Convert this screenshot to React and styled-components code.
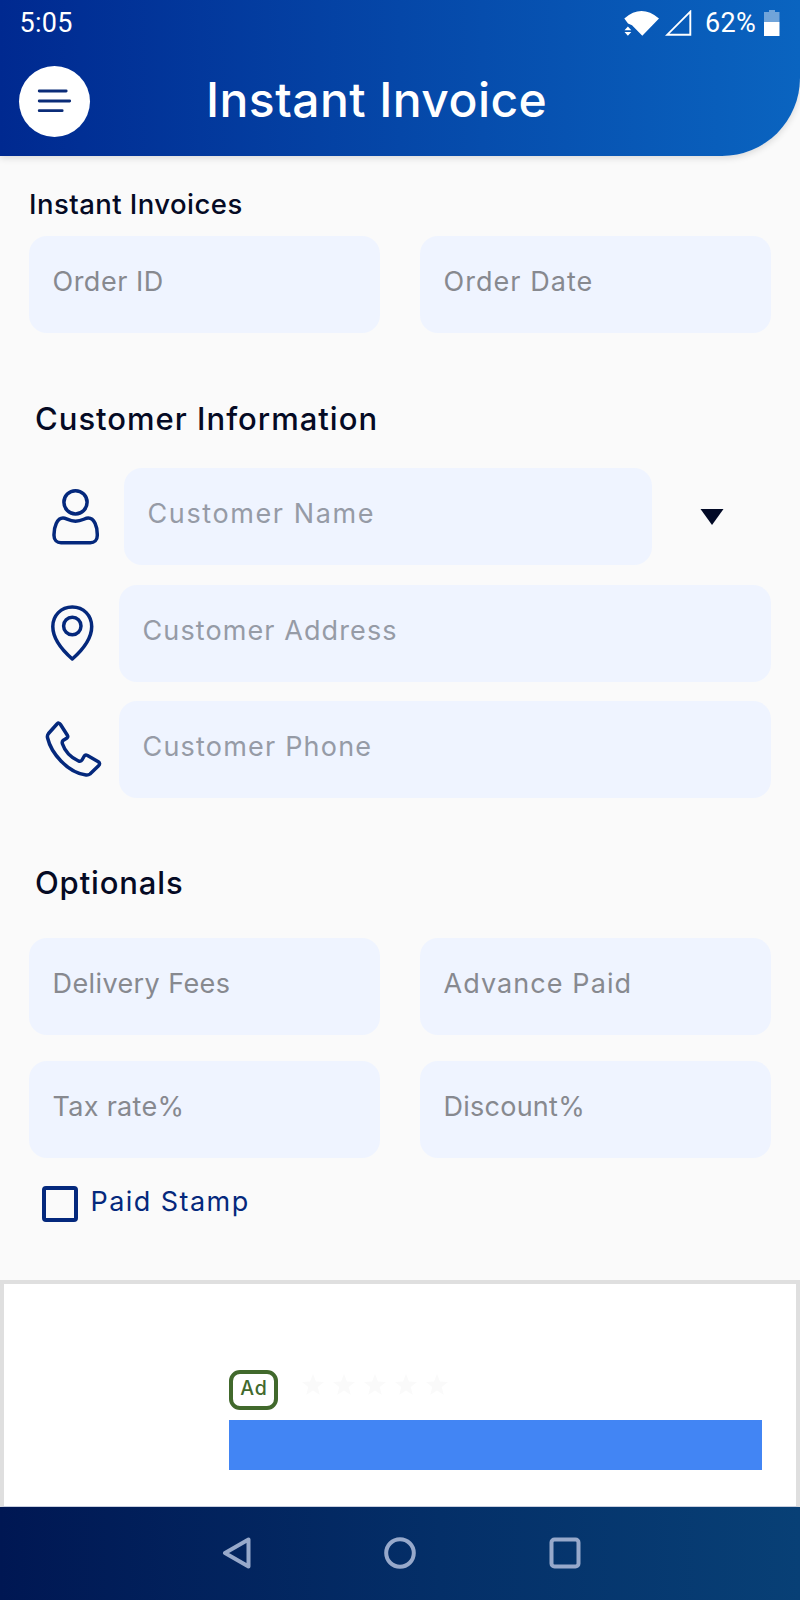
import React, { useState } from "react";
import styled, { createGlobalStyle } from "styled-components";

const GlobalStyle = createGlobalStyle`
  * {
    box-sizing: border-box;
  }
  body {
    margin: 0;
    background: #fafafa;
    font-family: Inter, "Liberation Sans", sans-serif;
  }
  svg {
    display: block;
    flex-shrink: 0;
  }
`;

const Screen = styled.div`
  width: 800px;
  height: 1600px;
  display: flex;
  flex-direction: column;
  background: #fafafa;
  overflow: hidden;
`;

const Header = styled.header`
  height: 155.5px;
  flex-shrink: 0;
  background: linear-gradient(90deg, #002990 0%, #0547a8 50%, #0a64c0 100%);
  border-bottom-right-radius: 78px;
  box-shadow: 0 2px 7px rgba(0, 0, 0, 0.14);
`;

const StatusBar = styled.div`
  height: 46px;
  padding: 0 20px 0 19.5px;
  display: flex;
  align-items: center;
  justify-content: space-between;
  color: #fff;
  font-family: Roboto, sans-serif;
  font-size: 27px;
  line-height: 36px;
  letter-spacing: 0.3px;
`;

const StatusIcons = styled.div`
  display: flex;
  align-items: center;
`;

const BatteryLevel = styled.span`
  margin-right: 8px;
`;

const TitleBar = styled.div`
  display: flex;
  align-items: center;
  height: 110px;
  padding-left: 19px;
`;

const MenuButton = styled.button`
  width: 71px;
  height: 71px;
  padding: 0;
  border: none;
  border-radius: 50%;
  background: #fff;
  display: flex;
  align-items: center;
  justify-content: center;
  cursor: pointer;
`;

const Title = styled.h1`
  margin: 0 0 4px 116px;
  color: #fff;
  font-size: 48px;
  font-weight: 500;
  letter-spacing: 0.45px;
`;

const Form = styled.main`
  height: 1124.5px;
  flex-shrink: 0;
  padding: 28.5px 29px 0;
`;

const SectionTitle = styled.h2`
  margin: 0 0 ${({ $gap }) => $gap}px;
  padding-left: ${({ $small }) => ($small ? 0 : 6)}px;
  height: 40px;
  line-height: 40px;
  color: #050a24;
  font-size: ${({ $small }) => ($small ? 27.5 : 31)}px;
  font-weight: 500;
  letter-spacing: ${({ $spacing }) => $spacing}px;
`;

const FieldGrid = styled.div`
  display: grid;
  grid-template-columns: 351px 351px;
  column-gap: 40px;
  row-gap: 25.5px;
  margin-bottom: ${({ $after }) => $after}px;
`;

const Field = styled.div`
  height: 97px;
  flex: 1;
  padding: 0 22px 6px 23.5px;
  border-radius: 18px;
  background: #eff4ff;
  color: ${({ $soft }) => ($soft ? "#969ba6" : "#87898f")};
  display: flex;
  align-items: center;
  font-size: 27px;
  font-weight: 400;
  white-space: nowrap;
  letter-spacing: ${({ $spacing }) => $spacing}px;
`;

const CustomerList = styled.div`
  display: flex;
  flex-direction: column;
  gap: 19.5px;
  margin-bottom: 65px;
`;

const CustomerRow = styled.div`
  display: flex;
  align-items: center;
`;

const IconSlot = styled.div`
  width: ${({ $wide }) => ($wide ? 95 : 90)}px;
  padding-left: ${({ $left }) => $left}px;
`;

const Dropdown = styled.button`
  width: 119px;
  height: 97px;
  padding: 0 0 0 48px;
  border: none;
  background: none;
  display: flex;
  align-items: center;
  cursor: pointer;
`;

const StampRow = styled.label`
  display: flex;
  align-items: center;
  height: 36px;
  margin: 28.5px 0 0 13px;
  cursor: pointer;
`;

const CheckBox = styled.span`
  width: 36px;
  height: 36px;
  border: 4px solid #04287c;
  border-radius: 4px;
  background: ${({ $checked }) => ($checked ? "#04287c" : "transparent")};
`;

const StampLabel = styled.span`
  margin: 0 0 6px 12.5px;
  color: #04287c;
  font-size: 27px;
  font-weight: 400;
  letter-spacing: 1.45px;
`;

const AdBanner = styled.section`
  height: 226.5px;
  flex-shrink: 0;
  padding: 86px 0 0 225px;
  background: #fff;
  border: 4px solid #dfdfdf;
  border-bottom: 1px solid #c8cfe0;
`;

const AdMeta = styled.div`
  display: flex;
  align-items: center;
  gap: 24px;
  margin-bottom: 10px;
`;

const AdBadge = styled.span`
  width: 49px;
  height: 40px;
  padding: 0 0 4px 1px;
  border: 4px solid #41692c;
  border-radius: 11px;
  color: #41692c;
  display: flex;
  align-items: center;
  justify-content: center;
  font-size: 19.5px;
  font-weight: 500;
  letter-spacing: 0.8px;
`;

const Stars = styled.div`
  display: flex;
  gap: 9px;
  margin-bottom: 10px;
`;

const AdButton = styled.div`
  width: 532.5px;
  height: 50px;
  background: #4285f4;
`;

const NavBar = styled.nav`
  flex: 1;
  display: flex;
  justify-content: center;
  gap: 132.5px;
  padding-top: 30.5px;
  background: linear-gradient(90deg, #001753 0%, #042f68 55%, #084076 100%);
`;

const navStroke = { fill: "none", stroke: "#97a9cb", strokeWidth: 4, strokeLinejoin: "round" };
const lineStroke = { fill: "none", stroke: "#04287c", strokeWidth: 3.5, strokeLinejoin: "round" };

const WifiIcon = () => (
  <svg width="36" height="27" viewBox="624 10 36 27" fill="#fff">
    <path d="M624.3 18.4Q633 11 641.5 11t17.5 7.4L642.3 35.8 632 25.3l-4-1.8z" />
    <path d="M624.5 30.3l3.4-3.9 3.4 3.9zM624.5 32h6.8l-3.4 3.7z" />
  </svg>
);

const SignalIcon = () => (
  <svg width="45" height="27" viewBox="660 10 45 27">
    <path d="M667.3 34.7H690.3V11.7z" fill="none" stroke="#fff" strokeWidth="1.9" />
  </svg>
);

const BatteryIcon = () => (
  <svg width="16" height="27" viewBox="764 10 16 27" fill="#fff">
    <path d="M769 10h6v2h4.5v10H764V12h5z" opacity="0.42" />
    <path d="M764 22h15.5v14H764z" />
  </svg>
);

const MenuIcon = () => (
  <svg width="36" height="24" viewBox="0 0 36 24" stroke="#0b2c78" strokeWidth="2.8" strokeLinecap="round">
    <path d="M2.2 2h27M2.2 12h30.5M2.2 21.7h23" />
  </svg>
);

const PersonIcon = () => (
  <svg width="50" height="58" viewBox="51 487.5 50 58" {...lineStroke}>
    <circle cx="75.5" cy="501.8" r="11.6" />
    <path d="M63 517.5c-6 0-9 9-9 16.5v1c0 4.5 3 7.3 7 7.3h29.3c4 0 7-2.8 7-7.3v-1c0-8-3-16.5-9-16.5-3.8 0-6 3.2-12.8 3.2s-9-3.2-12.5-3.2z" />
  </svg>
);

const PinIcon = () => (
  <svg width="50" height="58" viewBox="48 603.5 50 58" {...lineStroke}>
    <path d="M72.3 606.5c-11.3 0-19.5 8.5-19.5 19.5s8.7 23 19.5 32.5c10.8-9.5 19.4-21.5 19.4-32.5s-8.1-19.5-19.4-19.5z" />
    <circle cx="72.3" cy="625.5" r="8.7" />
  </svg>
);

const PhoneIcon = () => (
  <svg width="58" height="58" viewBox="45 720.5 58 58" {...lineStroke}>
    <path d="M57 723.5L48.5 733C47.3 734.5 47.2 736 47.6 737.5C51 752 67 772 86 774.5C88 774.7 89 774.3 90 773.5L98.3 765.5C100 763.7 100 762.5 98.3 761.3L87.5 755C86 754.3 85 754.5 84.3 755.5L82 759.5C81.3 760.8 80 760.9 78.5 760.5C71 757 65 751 62.5 743.5C62 742 62 741 63 740L67 737.5C68 736.6 68 736 67.5 735L60.5 724C59.5 722.3 58.3 722.2 57 723.5Z" />
  </svg>
);

const StarIcon = () => (
  <svg width="22" height="22" viewBox="0 0 22 22" fill="#fafafa">
    <path d="M11 0l2.9 7.6 8.1.4-6.3 5.1 2.1 7.9-6.8-4.4-6.8 4.4 2.1-7.9L0 8l8.1-.4z" />
  </svg>
);

const App = () => {
  const [paid, setPaid] = useState(false);

  return (
    <Screen>
      <GlobalStyle />
      <Header>
        <StatusBar>
          <span>5:05</span>
          <StatusIcons>
            <WifiIcon />
            <SignalIcon />
            <BatteryLevel>62%</BatteryLevel>
            <BatteryIcon />
          </StatusIcons>
        </StatusBar>
        <TitleBar>
          <MenuButton aria-label="Menu">
            <MenuIcon />
          </MenuButton>
          <Title>Instant Invoice</Title>
        </TitleBar>
      </Header>

      <Form>
        <SectionTitle $small $gap={12} $spacing={0.45}>
          Instant Invoices
        </SectionTitle>
        <FieldGrid $after={66}>
          <Field $spacing={0.5}>Order ID</Field>
          <Field $spacing={1.05}>Order Date</Field>
        </FieldGrid>

        <SectionTitle $gap={29} $spacing={1}>
          Customer Information
        </SectionTitle>
        <CustomerList>
          <CustomerRow>
            <IconSlot $wide $left={22}>
              <PersonIcon />
            </IconSlot>
            <Field $soft $spacing={1.6}>
              Customer Name
            </Field>
            <Dropdown aria-label="Choose customer">
              <svg width="24" height="16" viewBox="0 0 24 16" fill="#020a26">
                <path d="M0.5 0h23L12 16z" />
              </svg>
            </Dropdown>
          </CustomerRow>
          <CustomerRow>
            <IconSlot $left={19}>
              <PinIcon />
            </IconSlot>
            <Field $soft $spacing={1.1}>
              Customer Address
            </Field>
          </CustomerRow>
          <CustomerRow>
            <IconSlot $left={16}>
              <PhoneIcon />
            </IconSlot>
            <Field $soft $spacing={1.2}>
              Customer Phone
            </Field>
          </CustomerRow>
        </CustomerList>

        <SectionTitle $gap={35} $spacing={0.85}>
          Optionals
        </SectionTitle>
        <FieldGrid $after={0}>
          <Field $spacing={0.4}>Delivery Fees</Field>
          <Field $spacing={1.08}>Advance Paid</Field>
          <Field $spacing={0.3}>Tax rate%</Field>
          <Field $spacing={0.25}>Discount%</Field>
        </FieldGrid>
        <StampRow onClick={() => setPaid(!paid)}>
          <CheckBox $checked={paid} />
          <StampLabel>Paid Stamp</StampLabel>
        </StampRow>
      </Form>

      <AdBanner>
        <AdMeta>
          <AdBadge>Ad</AdBadge>
          <Stars>
            {[1, 2, 3, 4, 5].map((n) => (
              <StarIcon key={n} />
            ))}
          </Stars>
        </AdMeta>
        <AdButton />
      </AdBanner>

      <NavBar>
        <svg width="32" height="32" viewBox="0 0 32 32" {...navStroke}>
          <path d="M28.5 2.5v27L5 16z" />
        </svg>
        <svg width="32" height="32" viewBox="0 0 32 32" {...navStroke}>
          <circle cx="16" cy="16" r="13.8" />
        </svg>
        <svg width="32" height="32" viewBox="0 0 32 32" {...navStroke}>
          <rect x="2.5" y="2.5" width="27" height="27" rx="3" />
        </svg>
      </NavBar>
    </Screen>
  );
};

export default App;
